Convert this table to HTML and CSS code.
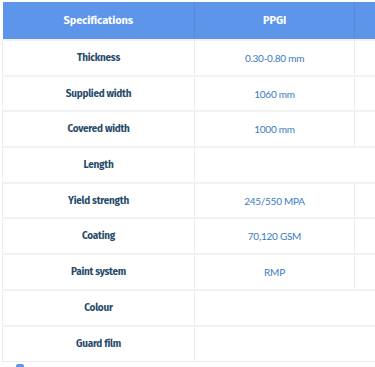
FILE: index.html
```html
<!DOCTYPE html>
<html lang="en">

<head>
    <meta charset="UTF-8">
    <meta name="viewport" content="width=device-width, initial-scale=1.0">
    <title>Specifications</title>
    <link rel="stylesheet" href="styles.css">
</head>

<body>
    <div class="wrapper">
        <table class="spec-table">
            <thead>
                <tr>
                    <th class="col-name">Specifications</th>
                    <th class="col-ppgi">PPGI</th>
                    <th class="col-extra"></th>
                </tr>
            </thead>
            <tbody>
                <tr>
                    <td class="label">Thickness</td>
                    <td class="value">0.30-0.80 mm</td>
                    <td class="value"></td>
                </tr>
                <tr>
                    <td class="label">Supplied width</td>
                    <td class="value">1060 mm</td>
                    <td class="value"></td>
                </tr>
                <tr>
                    <td class="label">Covered width</td>
                    <td class="value">1000 mm</td>
                    <td class="value"></td>
                </tr>
                <tr>
                    <td class="label">Length</td>
                    <td class="value" colspan="2"></td>
                </tr>
                <tr>
                    <td class="label">Yield strength</td>
                    <td class="value">245/550 MPA</td>
                    <td class="value"></td>
                </tr>
                <tr>
                    <td class="label">Coating</td>
                    <td class="value">70,120 GSM</td>
                    <td class="value"></td>
                </tr>
                <tr>
                    <td class="label">Paint system</td>
                    <td class="value">RMP</td>
                    <td class="value"></td>
                </tr>
                <tr>
                    <td class="label">Colour</td>
                    <td class="value" colspan="2"></td>
                </tr>
                <tr>
                    <td class="label">Guard film</td>
                    <td class="value" colspan="2"></td>
                </tr>
            </tbody>
        </table>
        <div class="scroll-thumb"></div>
    </div>
</body>

</html>
```

FILE: styles.css
```css
* {
    box-sizing: border-box;
}

body {
    margin: 0;
    background: #fff;
    font-family: "Fira Sans", Lato, "Noto Sans", sans-serif;
}

.wrapper {
    width: 375px;
    height: 367px;
    overflow: hidden;
    padding: 2px 0 0 2px;
    position: relative;
}

.spec-table {
    border-collapse: collapse;
    table-layout: fixed;
    width: 540px;
}

.spec-table th {
    background-color: #5c95ea;
    color: #fff;
    font-size: 11px;
    font-weight: 700;
    letter-spacing: -0.1px;
    height: 38px;
    border-right: 1px solid #5689d6;
    text-align: center;
}

.spec-table .col-name {
    width: 192px;
}

.spec-table .col-ppgi {
    width: 160px;
}

.spec-table td {
    height: 35.7px;
    text-align: center;
    border: 1px solid #ececec;
    border-top: 2px solid #f2f2f2;
}

.spec-table td.label {
    color: #274a6a;
    font-size: 10px;
    font-weight: 700;
    letter-spacing: -0.25px;
    padding-top: 1px;
}

.spec-table td.value {
    color: #3a7bbd;
    font-family: Lato, "Noto Sans", sans-serif;
    font-size: 10px;
    letter-spacing: -0.25px;
    padding-top: 1px;
}

.scroll-thumb {
    position: absolute;
    left: 16px;
    top: 364px;
    width: 8px;
    height: 3px;
    background: #5c95ea;
    border-radius: 2px 2px 0 0;
}
```
